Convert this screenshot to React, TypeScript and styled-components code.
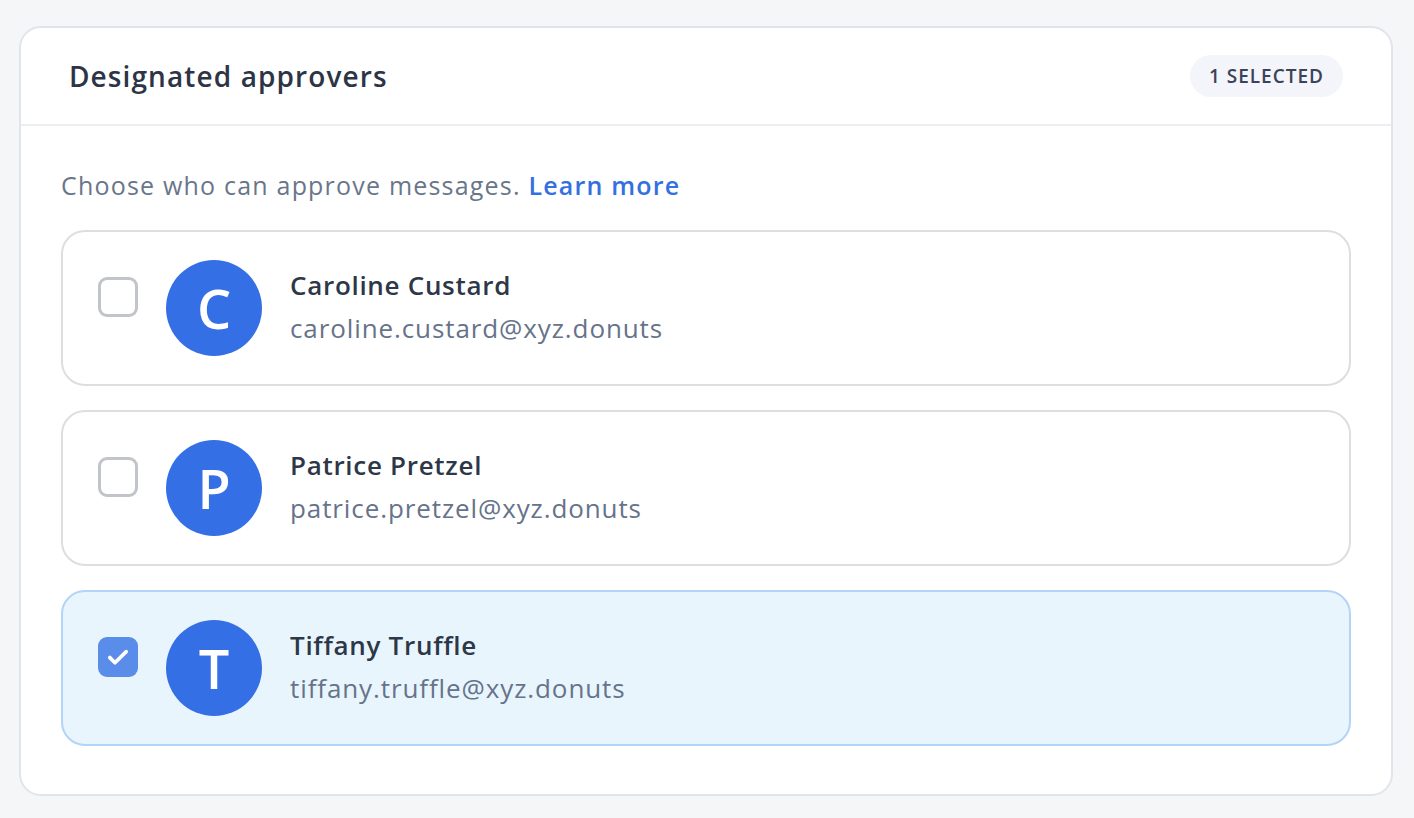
import React from "react";
import styled, { createGlobalStyle } from "styled-components";

const GlobalStyle = createGlobalStyle`
  html, body {
    margin: 0;
    padding: 0;
    background: #f5f6f8;
    font-family: "Open Sans", Lato, sans-serif;
    -webkit-font-smoothing: antialiased;
  }
`;

const Page = styled.div`
  padding: 26px 21px 21px 19px;
  box-sizing: border-box;
  min-height: 818px;
`;

const Card = styled.section`
  background: #ffffff;
  border: 2px solid #e1e4ea;
  border-radius: 22px;
  overflow: hidden;
`;

const Header = styled.header`
  display: flex;
  align-items: center;
  justify-content: space-between;
  height: 96px;
  padding: 0 48px 0 48px;
  border-bottom: 2px solid #eceef2;
`;

const Title = styled.h2`
  margin: 0;
  font-size: 28px;
  font-weight: 600;
  color: #2d3446;
  letter-spacing: 1.1px;
`;

const Badge = styled.span`
  display: inline-flex;
  align-items: center;
  height: 42px;
  padding: 0 19px;
  border-radius: 21px;
  background: #f3f5fa;
  color: #3b4358;
  font-size: 19px;
  font-weight: 600;
  letter-spacing: 1px;
`;

const Body = styled.div`
  padding: 43px 40px 48px 40px;
`;

const Intro = styled.p`
  margin: 0 0 29px 0;
  font-size: 25px;
  line-height: 32px;
  color: #69768a;
  letter-spacing: 1.2px;
`;

const Link = styled.a`
  color: #3370e0;
  font-weight: 600;
  text-decoration: none;
`;

const List = styled.div`
  display: flex;
  flex-direction: column;
  gap: 24px;
`;

const Row = styled.label<{ $selected?: boolean }>`
  display: flex;
  align-items: flex-start;
  gap: 28px;
  height: 156px;
  box-sizing: border-box;
  padding: 28px 35px;
  border-radius: 24px;
  border: 2px solid ${(p) => (p.$selected ? "#b3d4f7" : "#dcdee2")};
  background: ${(p) => (p.$selected ? "#e8f5fd" : "#ffffff")};
  cursor: pointer;
`;

const Box = styled.span<{ $checked?: boolean }>`
  flex: none;
  display: flex;
  align-items: center;
  justify-content: center;
  width: 40px;
  height: 40px;
  margin-top: 17px;
  box-sizing: border-box;
  border-radius: 9px;
  border: ${(p) => (p.$checked ? "none" : "3px solid #c1c4c9")};
  background: ${(p) => (p.$checked ? "#5a8cea" : "#ffffff")};
`;

const Avatar = styled.span`
  flex: none;
  display: flex;
  align-items: center;
  justify-content: center;
  width: 96px;
  height: 96px;
  border-radius: 50%;
  background: #356fe5;
  color: #ffffff;
  font-size: 54px;
  font-weight: 600;
  line-height: 1;
`;

const Info = styled.div`
  display: flex;
  flex-direction: column;
  padding-top: 7px;
`;

const Name = styled.span`
  font-size: 26px;
  line-height: 36px;
  font-weight: 600;
  color: #2d3748;
  letter-spacing: 0.7px;
`;

const Email = styled.span`
  margin-top: 8px;
  font-size: 26px;
  line-height: 34px;
  color: #66738a;
  letter-spacing: 0.9px;
`;

const Check = () => (
  <svg width="28" height="28" viewBox="0 0 24 24" fill="none">
    <path
      d="M5 12.5l4.4 4.4L19 7.4"
      stroke="#ffffff"
      strokeWidth="3.2"
      strokeLinecap="round"
      strokeLinejoin="round"
    />
  </svg>
);

type Person = { name: string; email: string; selected?: boolean };

const people: Person[] = [
  { name: "Caroline Custard", email: "caroline.custard@xyz.donuts" },
  { name: "Patrice Pretzel", email: "patrice.pretzel@xyz.donuts" },
  { name: "Tiffany Truffle", email: "tiffany.truffle@xyz.donuts", selected: true },
];

export default function App() {
  const count = people.filter((p) => p.selected).length;
  return (
    <>
      <GlobalStyle />
      <Page>
        <Card>
          <Header>
            <Title>Designated approvers</Title>
            <Badge>{count} SELECTED</Badge>
          </Header>
          <Body>
            <Intro>
              Choose who can approve messages. <Link href="#">Learn more</Link>
            </Intro>
            <List>
              {people.map((p) => (
                <Row key={p.email} $selected={p.selected}>
                  <Box $checked={p.selected}>{p.selected && <Check />}</Box>
                  <Avatar>{p.name[0]}</Avatar>
                  <Info>
                    <Name>{p.name}</Name>
                    <Email>{p.email}</Email>
                  </Info>
                </Row>
              ))}
            </List>
          </Body>
        </Card>
      </Page>
    </>
  );
}
